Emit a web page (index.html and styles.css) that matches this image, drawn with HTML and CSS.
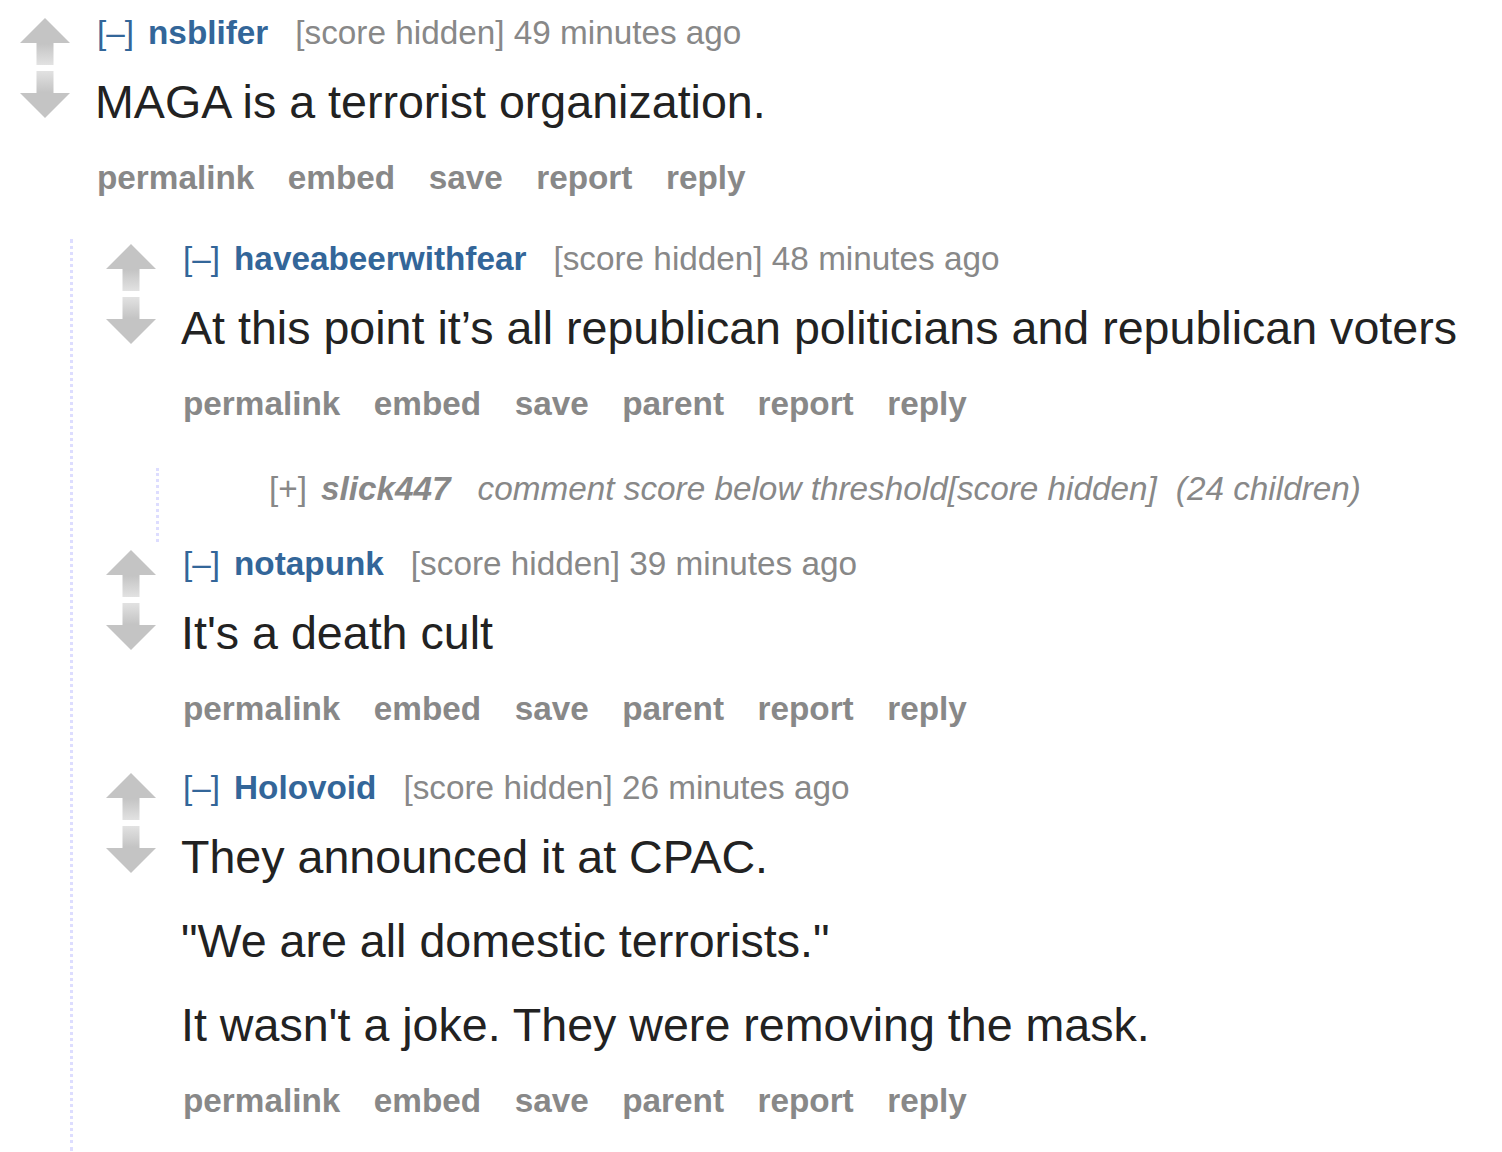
FILE: index.html
```html
<!DOCTYPE html>
<html>
<head>
<meta charset="utf-8">
<link rel="stylesheet" href="styles.css">
</head>
<body>
<div class="sitetable">
  <div class="comment">
    <div class="row">
      <div class="midcol">
        <svg class="arrow" width="50" height="47" viewBox="0 0 50 47"><defs><linearGradient id="gu" x1="0" y1="0" x2="0" y2="1"><stop offset="0.55" stop-color="#c4c4c4"/><stop offset="1" stop-color="#e2e2e2"/></linearGradient></defs><path d="M25 0 L50 25 L33.5 25 L33.5 47 L16.5 47 L16.5 25 L0 25 Z" fill="url(#gu)"/></svg>
        <svg class="arrow" width="50" height="47" viewBox="0 0 50 47"><defs><linearGradient id="gd" x1="0" y1="1" x2="0" y2="0"><stop offset="0.55" stop-color="#c4c4c4"/><stop offset="1" stop-color="#e2e2e2"/></linearGradient></defs><path d="M25 47 L50 22 L33.5 22 L33.5 0 L16.5 0 L16.5 22 L0 22 Z" fill="url(#gd)"/></svg>
      </div>
      <div class="entry">
        <p class="tagline"><a class="expand">[–]</a><a class="author">nsblifer</a><span class="meta">[score hidden] 49 minutes ago</span></p>
        <div class="md"><p>MAGA is a terrorist organization.</p></div>
        <ul class="buttons"><li>permalink</li><li>embed</li><li>save</li><li>report</li><li>reply</li></ul>
      </div>
    </div>
    <div class="child child-long">
      <div class="comment has-child">
        <div class="row">
          <div class="midcol">
            <svg class="arrow" width="50" height="47" viewBox="0 0 50 47"><path d="M25 0 L50 25 L33.5 25 L33.5 47 L16.5 47 L16.5 25 L0 25 Z" fill="url(#gu)"/></svg>
            <svg class="arrow" width="50" height="47" viewBox="0 0 50 47"><path d="M25 47 L50 22 L33.5 22 L33.5 0 L16.5 0 L16.5 22 L0 22 Z" fill="url(#gd)"/></svg>
          </div>
          <div class="entry">
            <p class="tagline"><a class="expand">[–]</a><a class="author">haveabeerwithfear</a><span class="meta">[score hidden] 48 minutes ago</span></p>
            <div class="md"><p>At this point it’s all republican politicians and republican voters</p></div>
            <ul class="buttons"><li>permalink</li><li>embed</li><li>save</li><li>parent</li><li>report</li><li>reply</li></ul>
          </div>
        </div>
        <div class="child">
          <div class="comment collapsed">
            <div class="row">
              <div class="midcol"></div>
              <div class="entry">
                <p class="tagline"><a class="expand gray">[+]</a><a class="author gray">slick447</a><em class="meta">comment score below threshold[score hidden]</em><em class="meta kids">(24 children)</em></p>
              </div>
            </div>
          </div>
        </div>
      </div>
      <div class="comment">
        <div class="row">
          <div class="midcol">
            <svg class="arrow" width="50" height="47" viewBox="0 0 50 47"><path d="M25 0 L50 25 L33.5 25 L33.5 47 L16.5 47 L16.5 25 L0 25 Z" fill="url(#gu)"/></svg>
            <svg class="arrow" width="50" height="47" viewBox="0 0 50 47"><path d="M25 47 L50 22 L33.5 22 L33.5 0 L16.5 0 L16.5 22 L0 22 Z" fill="url(#gd)"/></svg>
          </div>
          <div class="entry">
            <p class="tagline"><a class="expand">[–]</a><a class="author">notapunk</a><span class="meta">[score hidden] 39 minutes ago</span></p>
            <div class="md"><p>It's a death cult</p></div>
            <ul class="buttons"><li>permalink</li><li>embed</li><li>save</li><li>parent</li><li>report</li><li>reply</li></ul>
          </div>
        </div>
      </div>
      <div class="comment">
        <div class="row">
          <div class="midcol">
            <svg class="arrow" width="50" height="47" viewBox="0 0 50 47"><path d="M25 0 L50 25 L33.5 25 L33.5 47 L16.5 47 L16.5 25 L0 25 Z" fill="url(#gu)"/></svg>
            <svg class="arrow" width="50" height="47" viewBox="0 0 50 47"><path d="M25 47 L50 22 L33.5 22 L33.5 0 L16.5 0 L16.5 22 L0 22 Z" fill="url(#gd)"/></svg>
          </div>
          <div class="entry">
            <p class="tagline"><a class="expand">[–]</a><a class="author">Holovoid</a><span class="meta">[score hidden] 26 minutes ago</span></p>
            <div class="md"><p>They announced it at CPAC.</p><p>"We are all domestic terrorists."</p><p>It wasn't a joke. They were removing the mask.</p></div>
            <ul class="buttons"><li>permalink</li><li>embed</li><li>save</li><li>parent</li><li>report</li><li>reply</li></ul>
          </div>
        </div>
      </div>
    </div>
  </div>
</div>
</body>
</html>
```

FILE: styles.css
```css
html, body {
  margin: 0;
  padding: 0;
  background: #ffffff;
}
body {
  font-family: "Liberation Sans", Arial, sans-serif;
  color: #222222;
  height: 1152px;
  overflow: hidden;
}
.sitetable {
  padding: 12.5px 0 0 20px;
}
.row {
  display: flex;
  align-items: flex-start;
}
.midcol {
  width: 50px;
  flex: 0 0 50px;
  margin-right: 25px;
  padding-top: 5.5px;
  display: flex;
  flex-direction: column;
  gap: 6px;
}
.arrow {
  display: block;
}
.entry {
  flex: 1 1 auto;
  min-width: 0;
}
.tagline {
  margin: 0;
  padding-left: 2px;
  font-size: 33.3px;
  line-height: 40px;
  color: #888888;
  white-space: nowrap;
}
.expand {
  color: #336699;
  margin-right: 14px;
}
.author {
  color: #336699;
  font-weight: bold;
  margin-right: 27px;
}
.gray {
  color: #888888;
}
.collapsed .author {
  font-style: italic;
}
.meta {
  color: #888888;
}
.kids {
  margin-left: 19px;
}
.md {
  font-size: 46.6px;
  line-height: 68px;
  color: #222222;
}
.md p {
  margin: 15px 0 16px;
  white-space: nowrap;
}
.buttons {
  list-style: none;
  margin: 0;
  padding: 6px 0 0 2px;
  display: flex;
  gap: 33.5px;
  font-size: 33.3px;
  line-height: 40px;
  font-weight: bold;
  color: #888888;
}
.child {
  margin: 41px 0 0 50px;
  border-left: 3px dotted #ddddff;
  padding-left: 33px;
}
.child-long {
  padding-bottom: 30px;
}
.has-child .child {
  margin-top: 44px;
}
.collapsed {
  padding-top: 1.5px;
  padding-bottom: 32.5px;
}
.comment + .comment {
  margin-top: 38.5px;
}
.has-child + .comment {
  margin-top: 2.5px;
}
```
